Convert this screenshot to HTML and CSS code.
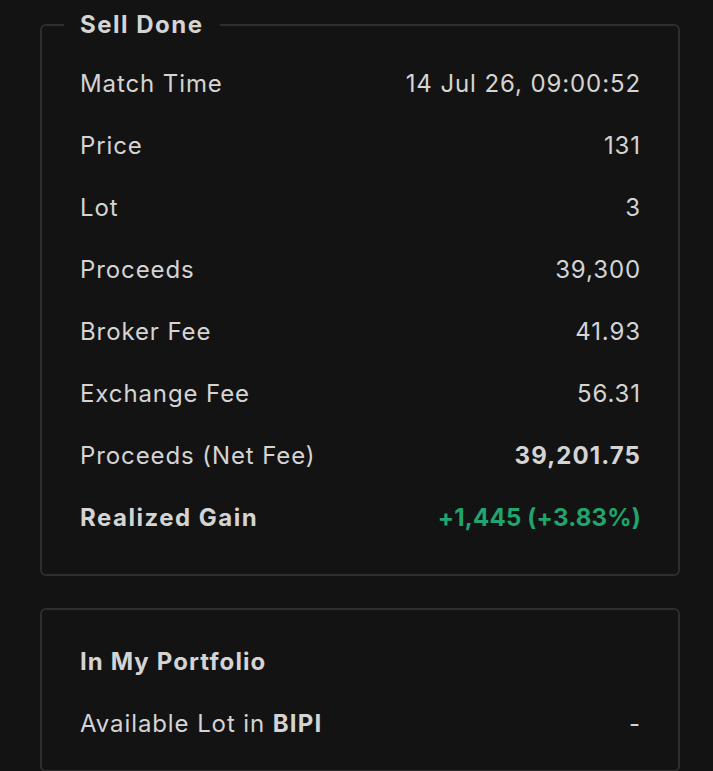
FILE: index.html
```html
<!DOCTYPE html>
<html>
<head>
<meta charset="utf-8">
<link rel="stylesheet" href="styles.css">
</head>
<body>
<main class="page">
  <fieldset class="card card-sell">
    <legend class="card-legend">Sell Done</legend>
    <div class="row"><span class="label">Match Time</span><span class="value">14 Jul 26, 09:00:52</span></div>
    <div class="row"><span class="label">Price</span><span class="value">131</span></div>
    <div class="row"><span class="label">Lot</span><span class="value">3</span></div>
    <div class="row"><span class="label">Proceeds</span><span class="value">39,300</span></div>
    <div class="row"><span class="label">Broker Fee</span><span class="value">41.93</span></div>
    <div class="row"><span class="label">Exchange Fee</span><span class="value">56.31</span></div>
    <div class="row"><span class="label">Proceeds (Net Fee)</span><span class="value strong-num">39,201.75</span></div>
    <div class="row"><span class="label strong">Realized Gain</span><span class="value gain">+1,445 (+3.83%)</span></div>
  </fieldset>
  <section class="card card-portfolio">
    <div class="row"><span class="label strong heading">In My Portfolio</span></div>
    <div class="row"><span class="label">Available Lot in <b class="ticker">BIPI</b></span><span class="value">-</span></div>
  </section>
</main>
</body>
</html>
```
FILE: styles.css
```css
html, body {
  margin: 0;
  padding: 0;
  background: #131313;
}
body {
  font-family: Inter, "Noto Sans", sans-serif;
  color: #d4d4d4;
  font-size: 24px;
  letter-spacing: 0.9px;
}
.page {
  padding: 1px 33px 0 40px;
  display: flex;
  flex-direction: column;
  gap: 32px;
}
.card {
  margin: 0;
  border: 2px solid #2e2e2e;
  border-radius: 6px;
  padding: 0 38px;
  min-width: 0;
}
.card-sell {
  padding-top: 3px;
  padding-bottom: 26px;
}
.card-legend {
  margin-left: -16px;
  padding: 0 16px;
  line-height: 48px;
  font-weight: 700;
  font-size: 24px;
  letter-spacing: 1.5px;
}
.card-portfolio {
  padding-top: 20px;
  padding-bottom: 16px;
}
.row {
  height: 62px;
  display: flex;
  align-items: center;
  justify-content: space-between;
}
.value {
  margin-right: -1px;
}
.strong {
  font-weight: 700;
  letter-spacing: 1.5px;
}
.heading {
  letter-spacing: 1.1px;
}
.strong-num {
  font-weight: 700;
  letter-spacing: 1.1px;
}
.ticker {
  font-weight: 700;
  letter-spacing: 1.2px;
}
.gain {
  color: #1fa56d;
  font-weight: 700;
  letter-spacing: 0.2px;
}
```
